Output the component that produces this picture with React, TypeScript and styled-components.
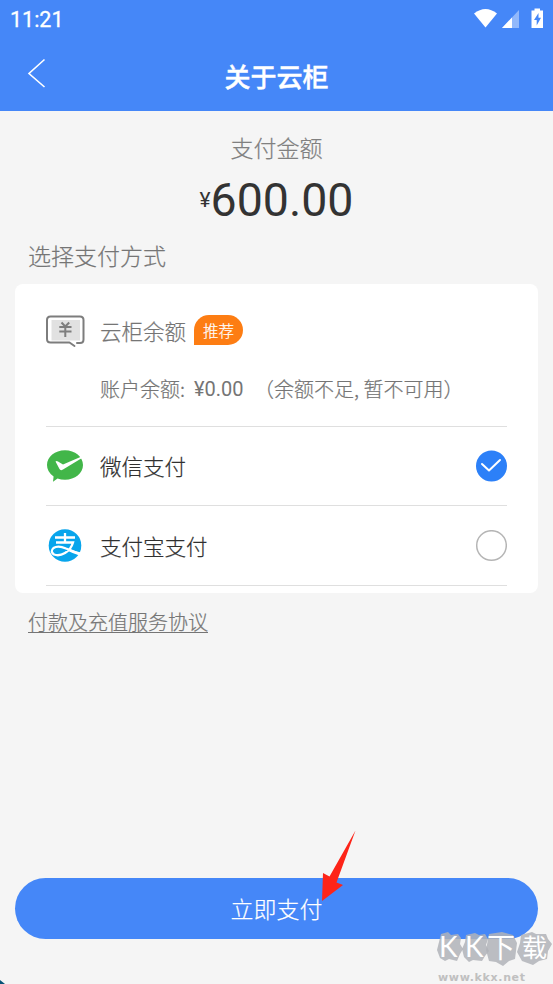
import React from "react";
import styled, { createGlobalStyle } from "styled-components";

const GlobalStyle = createGlobalStyle`
  * { box-sizing: border-box; }
  body {
    margin: 0;
    background: #f5f5f5;
    font-family: "Noto Sans CJK SC", sans-serif;
    font-weight: 300;
    -webkit-text-stroke: 0.22px currentColor;
    color: #333;
  }
`;

const Screen = styled.div`
  position: relative;
  display: flex;
  flex-direction: column;
  height: 984px;
  overflow: hidden;
`;

const Header = styled.header`
  height: 111px;
  background: #4587f8;
  color: #fff;
`;

const StatusBar = styled.div`
  display: flex;
  justify-content: space-between;
  align-items: center;
  height: 38px;
  padding: 0 7px 0 10px;
`;

const Clock = styled.span`
  font-family: Roboto, sans-serif;
  font-size: 21.5px;
  line-height: 38px;
  font-weight: 400;
  -webkit-text-stroke: 0.3px #fff;
  padding-top: 2px;
`;

const StatusIcons = styled.svg`
  width: 72px;
  height: 24px;
  margin-top: -2px;
`;

const NavBar = styled.div`
  display: grid;
  grid-template-columns: 64px 1fr 64px;
  align-items: center;
  height: 73px;
`;

const BackIcon = styled.svg`
  width: 20px;
  height: 30px;
  margin: -3px 0 0 27px;
`;

const Title = styled.h1`
  margin: 3px 0 0;
  font-size: 26px;
  line-height: 38px;
  font-weight: 500;
  -webkit-text-stroke: 0.4px #fff;
  text-align: center;
`;

const Amount = styled.section`
  display: flex;
  flex-direction: column;
  align-items: center;
  height: 125px;
  padding-top: 19px;
`;

const AmountLabel = styled.div`
  font-size: 23px;
  line-height: 34px;
  color: #808080;
`;

const AmountValue = styled.div`
  display: flex;
  align-items: center;
  height: 71px;
  font-family: Roboto, sans-serif;
  font-weight: 400;
  -webkit-text-stroke: 0;
  font-size: 46.5px;
`;

const Currency = styled.span`
  font-size: 21px;
`;

const SectionTitle = styled.h2`
  margin: 0;
  height: 48px;
  padding: 0 0 0 28px;
  font-size: 23px;
  line-height: 39px;
  font-weight: 300;
  color: #757575;
`;

const Card = styled.section`
  height: 309px;
  margin: 0 15px;
  padding: 0 31px;
  border-radius: 8px;
  background: #fff;
`;

const Method = styled.div<{ $height: number; $muted?: boolean }>`
  display: grid;
  grid-template-columns: 54px 1fr auto;
  align-items: center;
  align-content: center;
  height: ${(p) => p.$height}px;
  padding-top: ${(p) => (p.$muted ? 10 : 0)}px;
  border-bottom: 1px solid #dfdfdf;
  color: ${(p) => (p.$muted ? "#757575" : "#303030")};
`;

const MethodIcon = styled.svg`
  width: 40px;
  height: 40px;
`;

const MethodName = styled.div`
  display: flex;
  align-items: center;
  gap: 8px;
  font-size: 21.5px;
  line-height: 58px;
`;

const Badge = styled.span`
  width: 49px;
  height: 30px;
  border-radius: 15px 15px 15px 0;
  background: #fd7d13;
  color: #fff;
  font-size: 15.5px;
  line-height: 31px;
  text-align: center;
  margin-top: -3px;
`;

const Balance = styled.div`
  display: flex;
  grid-column: 2 / 4;
  font-size: 20px;
  line-height: 58px;
  white-space: pre;
`;

const BalanceLabel = styled.span`
  width: 94px;
`;

const BalanceValue = styled.span`
  width: 60px;
  font-family: Roboto, sans-serif;
  font-weight: 400;
  -webkit-text-stroke: 0;
`;

const Radio = styled.svg`
  width: 32px;
  height: 32px;
`;

const Agreement = styled.a`
  align-self: flex-start;
  margin: 13px 0 0 28px;
  font-size: 20px;
  line-height: 31px;
  color: #757575;
  text-decoration: underline;
  text-decoration-thickness: 1px;
  text-underline-offset: 2px;
`;

const PayButton = styled.button`
  height: 61px;
  margin: auto 15px 45px;
  padding: 0;
  border: 0;
  border-radius: 31px;
  background: #4587f8;
  color: #fff;
  font: 300 23px/59px "Noto Sans CJK SC", sans-serif;
`;

const Pointer = styled.svg`
  position: absolute;
  left: 318px;
  top: 828px;
  width: 42px;
  height: 76px;
`;

const Watermark = styled.div`
  position: absolute;
  left: 433px;
  top: 910px;
  width: 120px;
  height: 74px;
`;

const WatermarkArt = styled.svg`
  display: block;
  width: 120px;
  height: 74px;
`;

const CornerMark = styled.svg`
  position: absolute;
  left: 0;
  bottom: 0;
  width: 5px;
  height: 4px;
`;

const WalletIcon = () => (
  <MethodIcon viewBox="0 0 40 40" fill="none">
    <rect x="5.5" y="9" width="28.5" height="20.5" fill="#e1e1e1" />
    <path
      d="M31 32.5H34Q37.5 32.5 37.5 29V9.500Q37.500 6 34 6H4.500Q1 6 1 9.500V28.500Q1 32 4.500 32H23.500L28.500 35.500"
      stroke="#7d7d7d"
      strokeWidth="2"
      strokeLinecap="round"
      strokeLinejoin="round"
      transform="translate(0 -.5)"
    />
    <path d="M15.500 11.500L19.300 15.500L23.200 11.500M13.300 16H25.500M13.300 20.500H25.500M19.300 16V26" stroke="#7d7d7d" strokeWidth="2" />
  </MethodIcon>
);

const WechatIcon = () => (
  <MethodIcon viewBox="0 0 40 40">
    <path
      d="M19 4.300C29 4.300 37 10.700 37 19S29 33.700 19 33.700Q15 33.700 11.500 32.500L7 35.700L7.600 30.400Q1 26 1 19C1 10.700 9 4.300 19 4.300Z"
      fill="#42b649"
    />
    <path d="M9.500 15.500Q10.500 14.500 12 15.500L17 18.500L35 10.800L36 12L17 23.500Q14.500 25 13.500 23Z" fill="#fff" />
  </MethodIcon>
);

const AlipayIcon = () => (
  <MethodIcon viewBox="0 0 40 40" fill="none">
    <circle cx="19" cy="19.500" r="16.300" fill="#08a5ec" />
    <path d="M9 11.500H29M19 7V16.500M10 16.500H27Q25 23.500 19 27Q13 30.500 8 28.500Q3.800 25.500 7.500 22Q12 19 20 22.500L34 28" stroke="#fff" strokeWidth="2.300" />
    <path d="M23 22.500Q29 25.500 35 26.500L33.500 29.500Q27 27.500 21 24.500Z" fill="#fff" />
  </MethodIcon>
);

const RadioMark = ({ checked }: { checked?: boolean }) => (
  <Radio viewBox="0 0 32 32" fill="none" role="radio" aria-checked={!!checked}>
    {checked ? (
      <>
        <circle cx="16.500" cy="16" r="15.500" fill="#2c80f8" />
        <path d="M7 14L14 20.500L25 10" stroke="#fff" strokeWidth="2" strokeLinecap="round" strokeLinejoin="round" />
      </>
    ) : (
      <circle cx="16.500" cy="15.500" r="14.800" stroke="#b5b5b5" strokeWidth="1.500" />
    )}
  </Radio>
);

export default function App() {
  return (
    <>
      <GlobalStyle />
      <Screen>
        <Header>
          <StatusBar>
            <Clock>11:21</Clock>
            <StatusIcons viewBox="0 0 72 24">
              <path d="M0 7.500Q11.500-1.500 23 7.500L11.500 21.500Z" fill="#fff" />
              <path d="M45 4V22H28Z" fill="#91b8fb" />
              <path d="M38 11.500V22H28Z" fill="#fff" />
              <path d="M57.500 4.500H60.500V2.500H66V4.500H69V22H57.500Z" fill="#fff" />
              <path d="M64.500 7L60 14H62.700V19.500L67 11.800H64.500Z" fill="#4587f8" />
            </StatusIcons>
          </StatusBar>
          <NavBar>
            <BackIcon viewBox="0 0 20 30" fill="none">
              <path d="M17.500 1.500L2 15.500L17.500 29" stroke="#fff" strokeWidth="1.600" />
            </BackIcon>
            <Title>关于云柜</Title>
          </NavBar>
        </Header>
        <Amount>
          <AmountLabel>支付金额</AmountLabel>
          <AmountValue>
            <Currency>¥</Currency>600.00
          </AmountValue>
        </Amount>
        <SectionTitle>选择支付方式</SectionTitle>
        <Card>
          <Method $height={143} $muted>
            <WalletIcon />
            <MethodName>
              云柜余额<Badge>推荐</Badge>
            </MethodName>
            <Balance>
              <BalanceLabel>账户余额:</BalanceLabel>
              <BalanceValue>¥0.00</BalanceValue>
              <span>（余额不足, 暂不可用）</span>
            </Balance>
          </Method>
          <Method $height={79}>
            <WechatIcon />
            <MethodName>微信支付</MethodName>
            <RadioMark checked />
          </Method>
          <Method $height={80}>
            <AlipayIcon />
            <MethodName>支付宝支付</MethodName>
            <RadioMark />
          </Method>
        </Card>
        <Agreement>付款及充值服务协议</Agreement>
        <PayButton>立即支付</PayButton>
        <Pointer viewBox="0 0 42 76">
          <path d="M37.500 2.500L18.500 54.500L25 57L4 73L5 45L11.500 48.500Z" fill="#fd2418" />
        </Pointer>
        <Watermark>
          <WatermarkArt viewBox="-2 -20 120 74">
            <g fill="#b0b3b8" fillOpacity=".85">
              <path d="M6 4L13 2L16 5L23 4L26 8L25 14L28 19L25 24L22 31L14 29L10 31L5 28L2 20L4 12Z" />
              <path d="M31 5L40 3L44 5L50 4L53 9L51 15L54 21L50 26L47 31L38 30L34 32L29 27L27 19L30 12Z" />
              <path d="M54 4L67 2L78 5L82 13L80 29L74 31L68 36L61 32L54 31L51 20Z" />
              <path d="M86 5L97 2L101 4L111 4L113 9L117 14L113 21L112 29L104 31L98 35L87 31L82 22L85 13Z" />
            </g>
            <g fill="#fff" fontFamily="Lato, 'Noto Sans CJK SC', sans-serif" fontSize="28" fontWeight="400">
              <text x="4" y="27">K</text>
              <text x="30" y="27">K</text>
              <text x="52" y="28">下</text>
              <text x="87" y="27" fontSize="25">载</text>
            </g>
            <text x="3" y="51" fill="#c0c0c0" fontFamily="DejaVu Sans, sans-serif" fontSize="11" fontWeight="700" textLength="87">
              www.kkx.net
            </text>
          </WatermarkArt>
        </Watermark>
        <CornerMark viewBox="0 0 5 4">
          <path d="M0 0L5 4H0Z" fill="#075276" />
        </CornerMark>
      </Screen>
    </>
  );
}
